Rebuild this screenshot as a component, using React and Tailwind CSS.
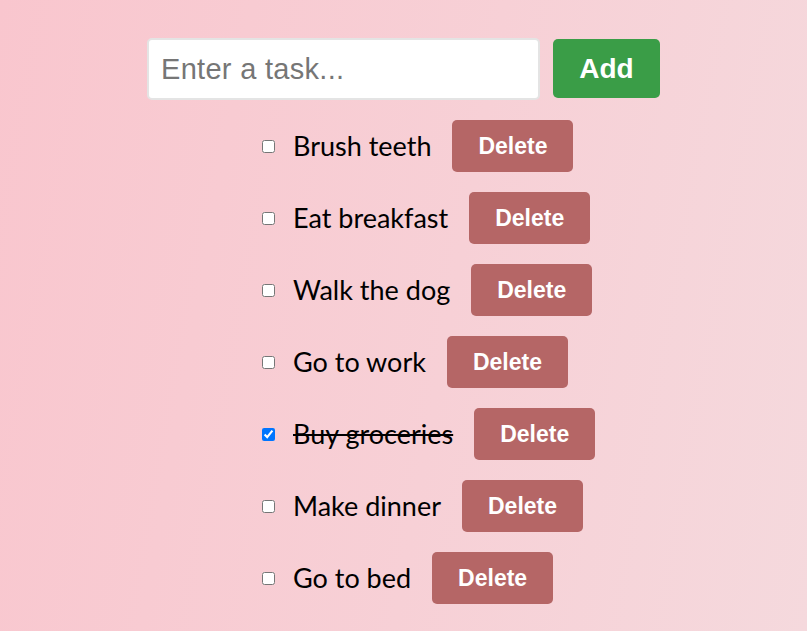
import { useState } from "react";

const initial = [
  { id: 1, text: "Brush teeth", done: false },
  { id: 2, text: "Eat breakfast", done: false },
  { id: 3, text: "Walk the dog", done: false },
  { id: 4, text: "Go to work", done: false },
  { id: 5, text: "Buy groceries", done: true },
  { id: 6, text: "Make dinner", done: false },
  { id: 7, text: "Go to bed", done: false },
];

export default function App() {
  const [tasks, setTasks] = useState(initial);
  const [input, setInput] = useState("");

  function addTask() {
    if (!input.trim()) return;
    setTasks([...tasks, { id: Date.now(), text: input.trim(), done: false }]);
    setInput("");
  }

  function toggle(id) {
    setTasks(tasks.map((t) => (t.id === id ? { ...t, done: !t.done } : t)));
  }

  function remove(id) {
    setTasks(tasks.filter((t) => t.id !== id));
  }

  return (
    <main className="min-h-[631px] w-full bg-[linear-gradient(100deg,#f9c6ce_0%,#f7d0d6_55%,#f5d9dd_100%)] font-['Liberation_Sans',Arial,sans-serif]">
      <div className="flex justify-center gap-[13px] pt-[38px]">
        <input
          value={input}
          onChange={(e) => setInput(e.target.value)}
          placeholder="Enter a task..."
          className="w-[393px] h-[62px] bg-white border-2 border-[#e4e4e4] rounded-[5px] px-3 text-[29px] tracking-[0.3px] text-black placeholder:text-[#767676] outline-none"
        />
        <button
          onClick={addTask}
          className="w-[107px] h-[59px] mt-[1px] bg-[#3a9d47] text-white text-[28px] font-bold rounded-[5px]"
        >
          Add
        </button>
      </div>

      <ul className="pl-[262px] pt-[20px]">
        {tasks.map((t) => (
          <li key={t.id} className="flex items-center h-[52px] mb-[20px]">
            <input
              type="checkbox"
              checked={t.done}
              onChange={() => toggle(t.id)}
              className="w-[13px] h-[13px] m-0 accent-[#0075ff]"
            />
            <span
              className={
                "ml-[18px] text-[27px] text-black font-['Lato','Noto_Sans',sans-serif] " +
                (t.done ? "line-through" : "")
              }
            >
              {t.text}
            </span>
            <button
              onClick={() => remove(t.id)}
              className="ml-[21px] w-[121px] h-[52px] bg-[#b56666] text-white text-[23px] font-bold rounded-[5px]"
            >
              Delete
            </button>
          </li>
        ))}
      </ul>
    </main>
  );
}
